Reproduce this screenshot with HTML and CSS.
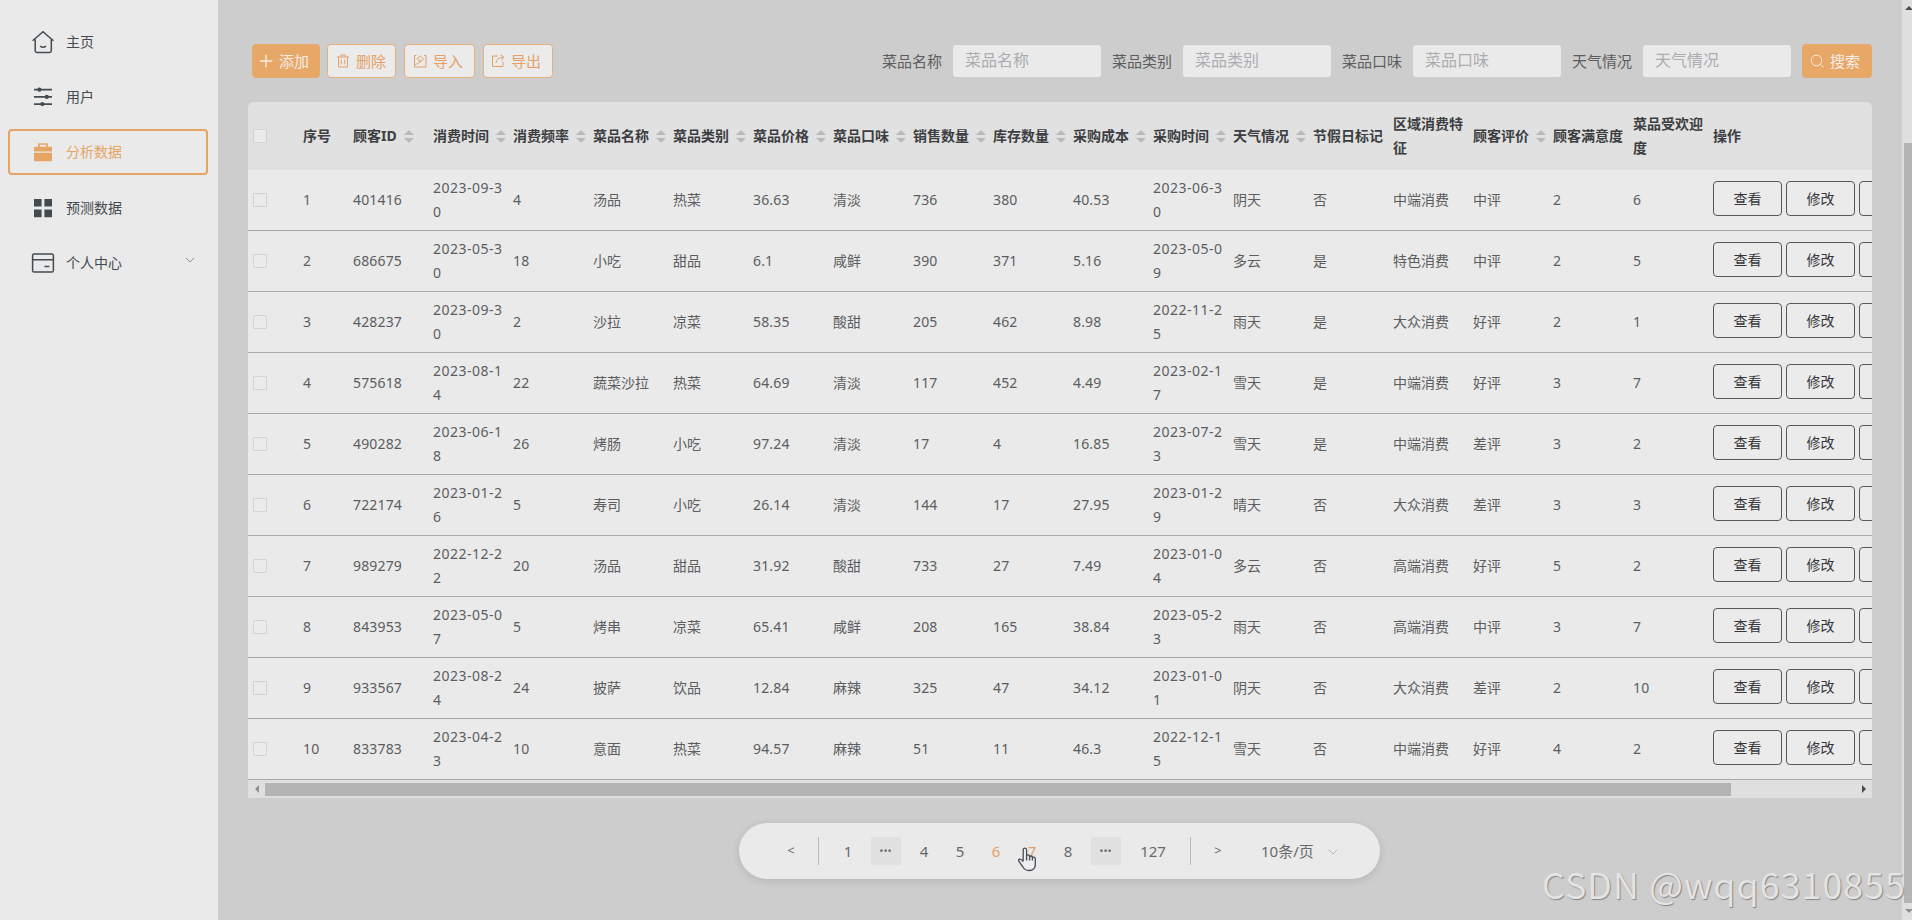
FILE: index.html
```html
<!DOCTYPE html>
<html lang="zh-CN">
<head>
<meta charset="utf-8">
<title>分析数据</title>
<link rel="stylesheet" href="styles.css">
</head>
<body>
<div class="app">
  <nav class="sidebar">
    <a class="item"><svg class="ico" viewBox="0 0 24 24"><path d="M4.2 9.5v11.3q0 1.6 1.6 1.6h12.9q1.6 0 1.6-1.6V9.5M1.6 10.7 12 1.8l10.4 8.9M9.2 16.2q3 2.2 5.8 0" fill="none" stroke="currentColor" stroke-width="1.5"/></svg><span>主页</span></a>
    <a class="item"><svg class="ico" viewBox="0 0 24 24"><path d="M3 4.7h18M3 11.9h18M3 19.1h18" stroke="currentColor" stroke-width="1.7"/><g fill="currentColor"><circle cx="8.4" cy="4.7" r="2.1"/><circle cx="15.8" cy="11.9" r="2.1"/><circle cx="11.3" cy="19.1" r="2.1"/></g></svg><span>用户</span></a>
    <a class="item active"><svg class="ico" viewBox="0 0 24 24"><path d="M3 12.8h18V20.2q0 1-1 1H4q-1 0-1-1zM7.3 6.8V3.2h9.5v3.6H20q1 0 1 1v3.8H3V7.8q0-1 1-1zM9 6.8h6.2V4.7H9z" fill="currentColor" fill-rule="evenodd"/></svg><span>分析数据</span></a>
    <a class="item"><svg class="ico" viewBox="0 0 24 24"><path d="M3 3h7.6v7.6H3zM13.4 3H21v7.6h-7.6zM3 13.6h7.6v7.6H3zM13.4 13.6H21v7.6h-7.6z" fill="currentColor"/></svg><span>预测数据</span></a>
    <a class="item"><svg class="ico" viewBox="0 0 24 24"><path d="M3.2 3h17.6q1.6 0 1.6 1.6v14.8q0 1.6-1.6 1.6H3.2q-1.6 0-1.6-1.6V4.6q0-1.6 1.6-1.6zM1.6 8.7h20.8M13.5 15.6h4.8" fill="none" stroke="currentColor" stroke-width="1.5"/></svg><span>个人中心</span><svg class="chev" viewBox="0 0 10 6"><path d="M.8.8 5 5 9.2.8" fill="none" stroke="currentColor" stroke-width="1"/></svg></a>
  </nav>
  <main class="main">
    <div class="toolbar">
      <button class="btn solid add"><svg viewBox="0 0 14 14"><path d="M7 .8v12.4M.8 7h12.4"/></svg>添加</button>
      <button class="btn del"><svg viewBox="0 0 14 14"><path d="M1 3h12M4.7 3V1h4.6v2M2.5 3v10h9V3M5.3 5.5v5M8.7 5.5v5"/></svg>删除</button>
      <button class="btn imp"><svg viewBox="0 0 14 14"><path d="M3.5 1.5H1.5v11.5h11.5V1.5h-2M1.8 10.5Q8 9.5 7.3 5.5M4 4.8l3.3-2.6 3.3 2.6-3.3 3.4z"/></svg>导入</button>
      <button class="btn exp"><svg viewBox="0 0 14 14"><path d="M7 2H1.5v10.5h10.5V7.5M5 9q.5-5.5 7.5-6M9.5.8l3.2 2.2-2.2 3"/></svg>导出</button>
      <div class="search">
        <label>菜品名称</label><input placeholder="菜品名称">
        <label>菜品类别</label><input placeholder="菜品类别">
        <label>菜品口味</label><input placeholder="菜品口味">
        <label>天气情况</label><input placeholder="天气情况">
        <button class="btn solid find"><svg viewBox="0 0 14 14"><circle cx="6.5" cy="6.5" r="5.3"/><path d="m10.3 10.5 3 3"/></svg>搜索</button>
      </div>
    </div>
    <section class="card">
      <div class="grid" id="grid"></div>
      <div class="hbar"><i class="arrow left"></i><div class="track"><div class="thumb"></div></div><i class="arrow right"></i></div>
    </section>
    <div class="pager">
      <span class="step">&lt;</span><i class="rule"></i>
      <span class="num first">1</span><span class="more">•••</span><span class="num">4</span><span class="num">5</span><span class="num on">6</span>
      <span class="num on">7<svg class="hand" viewBox="0 0 20 25"><path d="M6.2 14V3q0-1.9 1.7-1.9T9.6 3v6.3q0-1.5 1.5-1.5t1.5 1.5v1q0-1.3 1.4-1.3t1.4 1.3v1q0-1.1 1.4-1.1t1.5 1.5v5.8q0 6-6.3 6-4 0-6-3.5L2 14.5q-1-1.8.5-2.3t3.7 2.5M9.6 9v4.5M12.6 10v3.5M15.4 11v2.5" fill="#eee" stroke="#444b53" stroke-width="1.3"/></svg></span>
      <span class="num">8</span><span class="more">•••</span><span class="num wide">127</span><i class="rule end"></i><span class="step next">&gt;</span>
      <span class="size">10条/页</span><svg class="chev" viewBox="0 0 10 6"><path d="M.8.8 5 5 9.2.8" fill="none" stroke="currentColor" stroke-width="1"/></svg>
    </div>
  </main>
  <div class="vbar"><i class="arrow up"></i><div class="vthumb"></div><i class="arrow down"></i></div>
</div>
<div class="watermark">CSDN @wqq6310855</div>
<script src="table.js"></script>
</body>
</html>
```
FILE: styles.css
```css
* { box-sizing: border-box; }
body {
  margin: 0;
  height: 920px;
  overflow: hidden;
  background: #cdcdcd;
  color: #5b5d60;
  font: 14px/24px "Noto Sans", "Noto Sans CJK SC", sans-serif;
}
.app { display: flex; height: 920px; }
.sidebar {
  width: 218px;
  padding: 19px 10px 0 8px;
  background: #eaeaea;
  display: flex;
  flex-direction: column;
  gap: 9.2px;
  color: #444b50;
}
.item {
  display: flex;
  align-items: center;
  height: 46px;
  padding: 0 11px 0 21px;
  border: 2px solid transparent;
  border-radius: 4px;
  flex: none;
}
.item.active { border-color: #e5a564; color: #e5a564; }
.item span { margin-left: 11px; }
.ico { width: 24px; height: 24px; }
.chev { width: 10px; height: 6px; color: #909498; }
.item .chev { margin-left: auto; margin-bottom: 5px; }
.main { flex: 1; padding: 44px 30px 0; min-width: 0; }

.toolbar { display: flex; align-items: center; height: 34px; padding-left: 4px; }
.btn {
  display: flex;
  align-items: center;
  gap: 6px;
  height: 34px;
  padding: 0 0 2px 8px;
  border: 1px solid #e8b07a;
  border-radius: 4px;
  background: #ebebeb;
  color: #e5a067;
  font: 15px "Noto Sans", "Noto Sans CJK SC", sans-serif;
  white-space: nowrap;
}
.btn svg { width: 14px; height: 14px; margin-top: 2px; fill: none; stroke: currentColor; stroke-width: 1; }
.btn.solid { background: #e7a766; border-color: #e7a766; color: #f6eee6; }
.add { width: 68px; padding-left: 6px; }
.add svg { stroke-width: 1.4; }
.del { width: 69px; margin-left: 7px; }
.imp { width: 71px; margin-left: 8px; }
.exp { width: 70px; margin-left: 8px; padding-left: 7px; }
.find { width: 70px; padding-left: 7px; }
.search { display: flex; align-items: center; margin-left: auto; }
.search label { width: 60px; margin-right: 11px; font-size: 15px; white-space: nowrap; }
.search input {
  width: 148px;
  height: 32px;
  margin-right: 11px;
  padding: 0 12px 3px;
  border: 0;
  border-radius: 3px;
  background: #eaeaea;
  font: 16px "Noto Sans", "Noto Sans CJK SC", sans-serif;
}
.search input::placeholder { color: #abadb1; opacity: 1; }

.card {
  width: 1624px;
  margin-top: 24px;
  overflow: hidden;
  border-radius: 6px 6px 0 0;
  background: #eaeaea;
}
.row {
  display: grid;
  grid-template-columns: 50px 50px repeat(17, 80px) 240px;
  width: 1700px;
  height: 61.05px;
  align-items: center;
  border-bottom: 1px solid #a9a9a9;
}
.row.head {
  height: 68px;
  border: 0;
  background: #e1e1e1;
  color: #3c3e42;
  font-weight: 700;
}
.cell { padding: 0 5px; word-break: break-all; }
.cell.date { letter-spacing: .5px; padding-right: 0; width: 78px; }
.cell.num { letter-spacing: .15px; }
.head .cell { display: flex; align-items: center; padding-right: 0; white-space: nowrap; }
.head .cell.wrap { white-space: normal; padding-right: 5px; }
.box { display: block; width: 14px; height: 14px; border: 1px solid #d2d3d5; border-radius: 1px; background: #ebebeb; }
.sort { flex: none; width: 24px; display: flex; flex-direction: column; align-items: center; gap: 3px; }
.sort::before, .sort::after { content: ""; border: 5px solid transparent; }
.sort::before { border-top-width: 0; border-bottom-color: #b7b9bc; }
.sort::after { border-bottom-width: 0; border-top-color: #b7b9bc; }
.ops { display: flex; gap: 4px; padding-bottom: 3px; }
.ops button {
  flex: none;
  width: 69px;
  height: 35px;
  padding: 0 0 2px;
  border: 1.5px solid #55575a;
  border-radius: 4px;
  background: #ebebeb;
  color: #36373a;
  font: 14px "Noto Sans", "Noto Sans CJK SC", sans-serif;
}
.hbar { display: flex; height: 17.5px; align-items: center; background: #dfdfdf; }
.track { flex: 1; }
.thumb { width: 1466px; height: 13px; background: #b4b4b4; }
.arrow { width: 17px; display: flex; justify-content: center; }
.arrow::before { content: ""; border: 4px solid transparent; }
.left::before { border-left-width: 0; border-right-color: #8d8d8d; }
.right::before { border-right-width: 0; border-left-color: #4b4b4b; }

.pager {
  display: flex;
  align-items: center;
  width: 641px;
  height: 56px;
  margin: 25px 0 0 491px;
  padding-left: 30px;
  border-radius: 28px;
  background: #eaeaea;
  box-shadow: 0 2px 8px rgba(0, 0, 0, .12);
  font-size: 15px;
  color: #68696c;
}
.step { width: 44px; text-align: center; font-size: 13px; padding-bottom: 2px; }
.rule { width: 1px; height: 28px; margin: 0 11px 0 5px; background: #b9b9b9; }
.num { flex: none; }
.pager .num { position: relative; width: 36px; text-align: center; }
.pager .num.on { color: #e5a067; }
.pager .num.wide { width: 54px; }
.more {
  width: 30px;
  height: 28px;
  margin: 0 5px;
  background: #e1e1e1;
  text-align: center;
  font: 700 9px/28px "Liberation Sans", sans-serif;
  letter-spacing: 1px;
}
.rule.end { margin: 0 9px 0 10px; }
.step.next { width: 36px; }
.size { margin-left: 25px; white-space: nowrap; }
.pager > .chev { margin-left: 14px; margin-top: 2px; color: #b6b8bb; }
.hand { position: absolute; left: 3px; top: 8px; width: 20px; height: 25px; }

.vbar { width: 10px; padding-left: 2px; background: #dfdfdf; overflow: hidden; }
.vthumb { height: 760px; background: #b4b4b4; }
.up { width: 10px; height: 143px; padding-top: 6px; }
.up::before { height: 0; border-top-width: 0; border-bottom-color: #4b4b4b; }
.down { width: 10px; padding-top: 6px; }
.down::before { border-bottom-width: 0; border-top-color: #8d8d8d; }
.watermark {
  position: absolute;
  left: 1542px;
  top: 858px;
  font: 350 36px/50px "Noto Sans CJK SC", sans-serif;
  letter-spacing: 1.1px;
  color: #e4e4e4;
  text-shadow: 1px 1px 1px #858585;
  white-space: nowrap;
}
```
FILE: table.js
```js
const heads = ['序号', '顾客ID^', '消费时间^', '消费频率^', '菜品名称^', '菜品类别^', '菜品价格^', '菜品口味^', '销售数量^', '库存数量^', '采购成本^', '采购时间^', '天气情况^', '节假日标记', '区域消费特征', '顾客评价^', '顾客满意度', '菜品受欢迎度', '操作'];
const rows = [
  '1 401416 2023-09-30 4 汤品 热菜 36.63 清淡 736 380 40.53 2023-06-30 阴天 否 中端消费 中评 2 6',
  '2 686675 2023-05-30 18 小吃 甜品 6.1 咸鲜 390 371 5.16 2023-05-09 多云 是 特色消费 中评 2 5',
  '3 428237 2023-09-30 2 沙拉 凉菜 58.35 酸甜 205 462 8.98 2022-11-25 雨天 是 大众消费 好评 2 1',
  '4 575618 2023-08-14 22 蔬菜沙拉 热菜 64.69 清淡 117 452 4.49 2023-02-17 雪天 是 中端消费 好评 3 7',
  '5 490282 2023-06-18 26 烤肠 小吃 97.24 清淡 17 4 16.85 2023-07-23 雪天 是 中端消费 差评 3 2',
  '6 722174 2023-01-26 5 寿司 小吃 26.14 清淡 144 17 27.95 2023-01-29 晴天 否 大众消费 差评 3 3',
  '7 989279 2022-12-22 20 汤品 甜品 31.92 酸甜 733 27 7.49 2023-01-04 多云 否 高端消费 好评 5 2',
  '8 843953 2023-05-07 5 烤串 凉菜 65.41 咸鲜 208 165 38.84 2023-05-23 雨天 否 高端消费 中评 3 7',
  '9 933567 2023-08-24 24 披萨 饮品 12.84 麻辣 325 47 34.12 2023-01-01 阴天 否 大众消费 差评 2 10',
  '10 833783 2023-04-23 10 意面 热菜 94.57 麻辣 51 11 46.3 2022-12-15 雪天 否 中端消费 好评 4 2'
];
const box = '<div class="cell"><i class="box"></i></div>';
const head = heads.map(h => {
  const label = h.replace('^', '');
  const cls = label.length > 5 ? 'cell wrap' : 'cell';
  return `<div class="${cls}">${label}${h.endsWith('^') ? '<i class="sort"></i>' : ''}</div>`;
}).join('');
const cellClass = v => /^\d+-/.test(v) ? 'cell date' : /^\d/.test(v) ? 'cell num' : 'cell';
const cells = r => r.split(' ').map(v => {
  const text = /^\d+-/.test(v) ? v.slice(0, 9) + '<br>' + v.slice(9) : v;
  return `<div class="${cellClass(v)}">${text}</div>`;
}).join('');
const ops = '<div class="cell ops"><button>查看</button><button>修改</button><button></button></div>';
document.getElementById('grid').innerHTML =
  `<div class="row head">${box}${head}</div>` +
  rows.map(r => `<div class="row">${box}${cells(r)}${ops}</div>`).join('');
```
